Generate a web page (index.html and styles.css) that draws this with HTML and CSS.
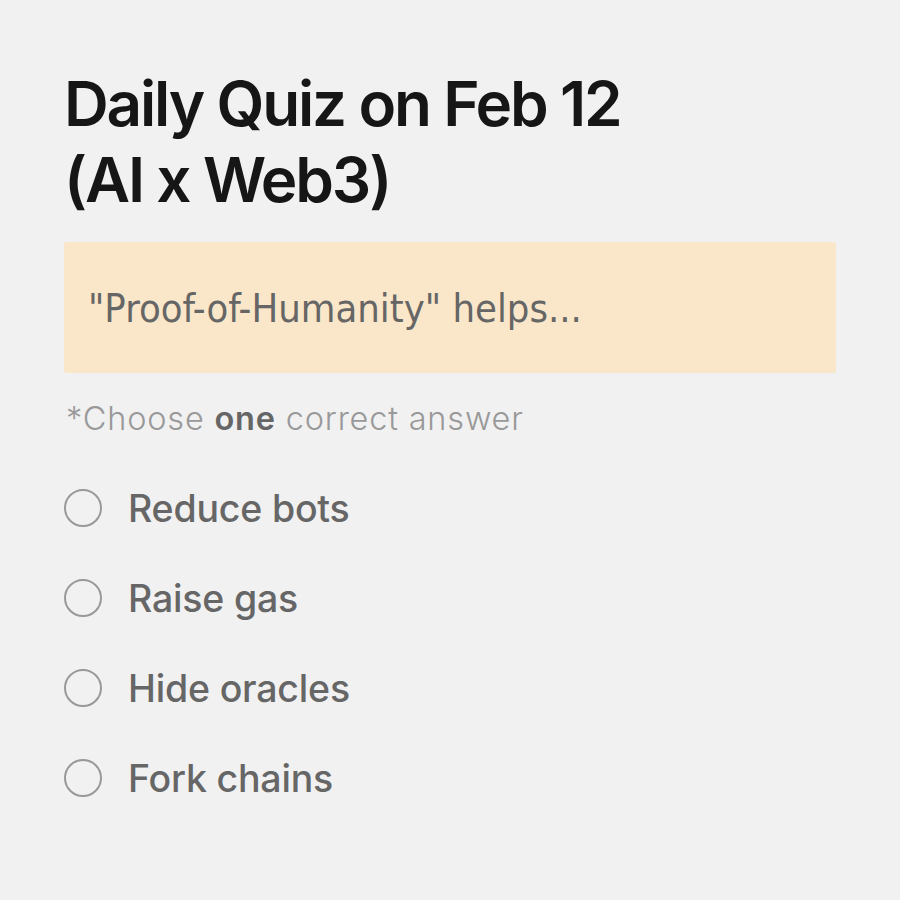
FILE: index.html
```html
<!DOCTYPE html>
<html>
<head>
<meta charset="utf-8">
<link rel="stylesheet" href="styles.css">
</head>
<body>
<main class="quiz">
  <h1 class="title">Daily Quiz on Feb 12<br>(AI x Web3)</h1>
  <div class="question">"Proof-of-Humanity" helps...</div>
  <p class="hint">*Choose <b>one</b> correct answer</p>
  <ul class="options">
    <li class="option"><span class="radio"></span><span class="label">Reduce bots</span></li>
    <li class="option"><span class="radio"></span><span class="label">Raise gas</span></li>
    <li class="option"><span class="radio"></span><span class="label">Hide oracles</span></li>
    <li class="option"><span class="radio"></span><span class="label">Fork chains</span></li>
  </ul>
</main>
</body>
</html>
```
FILE: styles.css
```css
html, body {
  margin: 0;
  padding: 0;
  background: #f1f1f1;
}
body {
  font-family: Inter, "Noto Sans", sans-serif;
}
.quiz {
  padding: 66px 64px 0 64px;
  display: flex;
  flex-direction: column;
}
.title {
  margin: 0;
  font-size: 62px;
  line-height: 76px;
  font-weight: 600;
  letter-spacing: -0.035em;
  color: #161616;
}
.question {
  margin-top: 24px;
  height: 131px;
  background: #fae6c8;
  border-radius: 3px;
  display: flex;
  align-items: center;
  padding: 0 24px;
  font-family: "Liberation Sans Narrow", "DejaVu Sans Condensed", sans-serif;
  font-size: 39.6px;
  color: #666;
}
.hint {
  margin: 26px 0 0 2px;
  font-size: 32.5px;
  line-height: 40px;
  font-weight: 300;
  letter-spacing: 0.025em;
  color: #999;
}
.hint b {
  font-weight: 600;
  color: #666;
}
.options {
  list-style: none;
  margin: 45px 0 0 0;
  padding: 0;
  display: flex;
  flex-direction: column;
  gap: 42px;
}
.option {
  display: flex;
  align-items: center;
  gap: 26px;
  height: 48px;
}
.radio {
  width: 34px;
  height: 34px;
  border: 2.5px solid #999;
  border-radius: 50%;
  flex: none;
}
.label {
  font-size: 37.5px;
  font-weight: 500;
  color: #666;
  letter-spacing: -0.005em;
}
```
